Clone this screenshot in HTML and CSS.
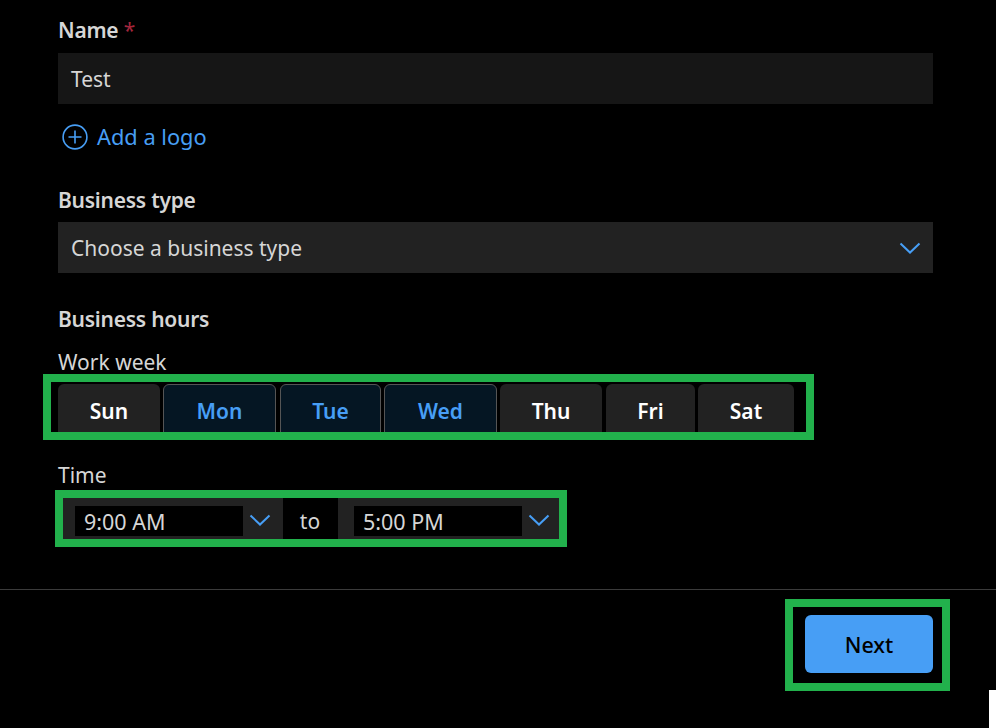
FILE: index.html
```html
<!DOCTYPE html>
<html lang="en">
<head>
<meta charset="utf-8">
<title>Business details</title>
<link rel="stylesheet" href="styles.css">
</head>
<body>
<main class="form">
  <div class="label name-label"><b>Name</b> <span class="req">*</span></div>
  <div class="field field-input">Test</div>
  <a class="add-logo">
    <svg class="plus" width="26" height="26" viewBox="0 0 26 26" fill="none" stroke="currentColor" stroke-width="1.6"><circle cx="13" cy="13" r="11.9"/><path d="M13 6.5v13M6.5 13h13"/></svg>
    <span>Add a logo</span>
  </a>
  <div class="label type-label"><b>Business type</b></div>
  <div class="field field-select">
    <span>Choose a business type</span>
    <svg class="chev" width="22" height="14" viewBox="0 0 22 14" fill="none" stroke="currentColor" stroke-width="2"><path d="M1.5 2.5 11 11.5l9.5-9"/></svg>
  </div>
  <div class="label hours-label"><b>Business hours</b></div>
  <div class="label week-label">Work week</div>
  <div class="mark week">
    <div class="day sun">Sun</div>
    <div class="day on mon">Mon</div>
    <div class="day on tue">Tue</div>
    <div class="day on wed">Wed</div>
    <div class="day thu">Thu</div>
    <div class="day fri">Fri</div>
    <div class="day sat">Sat</div>
  </div>
  <div class="label time-label">Time</div>
  <div class="mark time">
    <div class="picker from">
      <div class="value">9:00 AM</div>
      <svg class="chev" width="22" height="14" viewBox="0 0 22 14" fill="none" stroke="currentColor" stroke-width="2"><path d="M1.5 2.5 11 11.5l9.5-9"/></svg>
    </div>
    <div class="to">to</div>
    <div class="picker until">
      <div class="value">5:00 PM</div>
      <svg class="chev" width="22" height="14" viewBox="0 0 22 14" fill="none" stroke="currentColor" stroke-width="2"><path d="M1.5 2.5 11 11.5l9.5-9"/></svg>
    </div>
  </div>
</main>
<footer class="footer">
  <div class="mark next-mark"><button class="next" type="button">Next</button></div>
</footer>
<div class="corner"></div>
</body>
</html>
```

FILE: styles.css
```css
html, body {
  margin: 0;
  padding: 0;
  height: 728px;
  overflow: hidden;
  background: #000;
}
body {
  position: relative;
  font-family: "Noto Sans", "Open Sans", sans-serif;
  font-size: 21px;
  color: #d6d6d6;
}
.form {
  display: flex;
  flex-direction: column;
  align-items: flex-start;
  padding: 0 63px 0 58px;
  height: 589px;
  box-sizing: border-box;
}
.label {
  line-height: 28px;
  height: 28px;
}
.label b { font-weight: 600; letter-spacing: -0.25px; }
.name-label { margin-top: 16px; }
.req { color: #a4263c; }
.field {
  width: 100%;
  height: 51px;
  display: flex;
  align-items: center;
  justify-content: space-between;
  box-sizing: border-box;
  padding: 0 12px 0 13px;
}
.field-input { margin-top: 9px; background: #161616; }
.field-select { margin-top: 8px; background: #222; }
.add-logo {
  display: flex;
  align-items: center;
  gap: 9px;
  margin: 20px 0 0 4px;
  height: 26px;
  font-size: 21.8px;
  color: #479ef5;
}
.add-logo span { margin-bottom: 2px; }
.type-label { margin-top: 36px; }
.hours-label { margin-top: 32px; }
.week-label { margin-top: 15px; font-weight: 400; }
.chev { color: #479ef5; flex: none; display: block; }
.mark {
  border: 8px solid #22b14c;
  box-sizing: border-box;
  display: flex;
}
.week {
  margin: -2px 0 0 -15px;
  width: 771px;
  height: 66px;
  padding-left: 7px;
  overflow: hidden;
}
.day {
  box-sizing: border-box;
  margin-top: 2px;
  height: 52px;
  background: #222;
  border-radius: 6px 6px 0 0;
  color: #fff;
  font-weight: 600;
  text-align: center;
  line-height: 54px;
}
.day.on {
  background: #051623;
  color: #479ef5;
  border: 1px solid #555;
  line-height: 52px;
}
.sun { width: 102px; margin-right: 3px; }
.mon { width: 113px; margin-right: 4px; }
.tue { width: 101px; margin-right: 3px; }
.wed { width: 113px; margin-right: 3px; }
.thu { width: 102px; margin-right: 4px; }
.fri { width: 89px; margin-right: 3px; }
.sat { width: 96px; }
.time-label { margin-top: 21px; }
.time {
  margin: 1px 0 0 -3px;
  width: 512px;
  height: 57px;
}
.picker {
  display: flex;
  align-items: center;
  background: #222;
  padding-top: 4px;
  box-sizing: border-box;
  font-size: 21.5px;
}
.from { width: 220px; padding-left: 12px; }
.until { width: 221px; padding-left: 16px; }
.picker .chev { margin-left: 6px; margin-top: -2px; }
.value {
  width: 168px;
  height: 30px;
  line-height: 32px;
  background: #000;
  box-sizing: border-box;
  padding-left: 9px;
}
.to {
  width: 55px;
  flex: none;
  text-align: center;
  line-height: 46px;
  padding-right: 1px;
  box-sizing: border-box;
}
.footer {
  border-top: 1px solid #3b3b3b;
  display: flex;
  justify-content: flex-end;
  padding: 9px 46px 0 0;
}
.next-mark {
  width: 165px;
  height: 92px;
  padding: 8px 9px 0 12px;
}
.next {
  width: 128px;
  height: 58px;
  border: 0;
  border-radius: 6px;
  background: #479ef5;
  color: #000;
  padding: 0;
  font: 500 21.5px "Noto Sans", "Open Sans", sans-serif;
}
.corner {
  position: absolute;
  left: 989px;
  top: 690px;
  width: 7px;
  height: 38px;
  background: #fff;
}
```
